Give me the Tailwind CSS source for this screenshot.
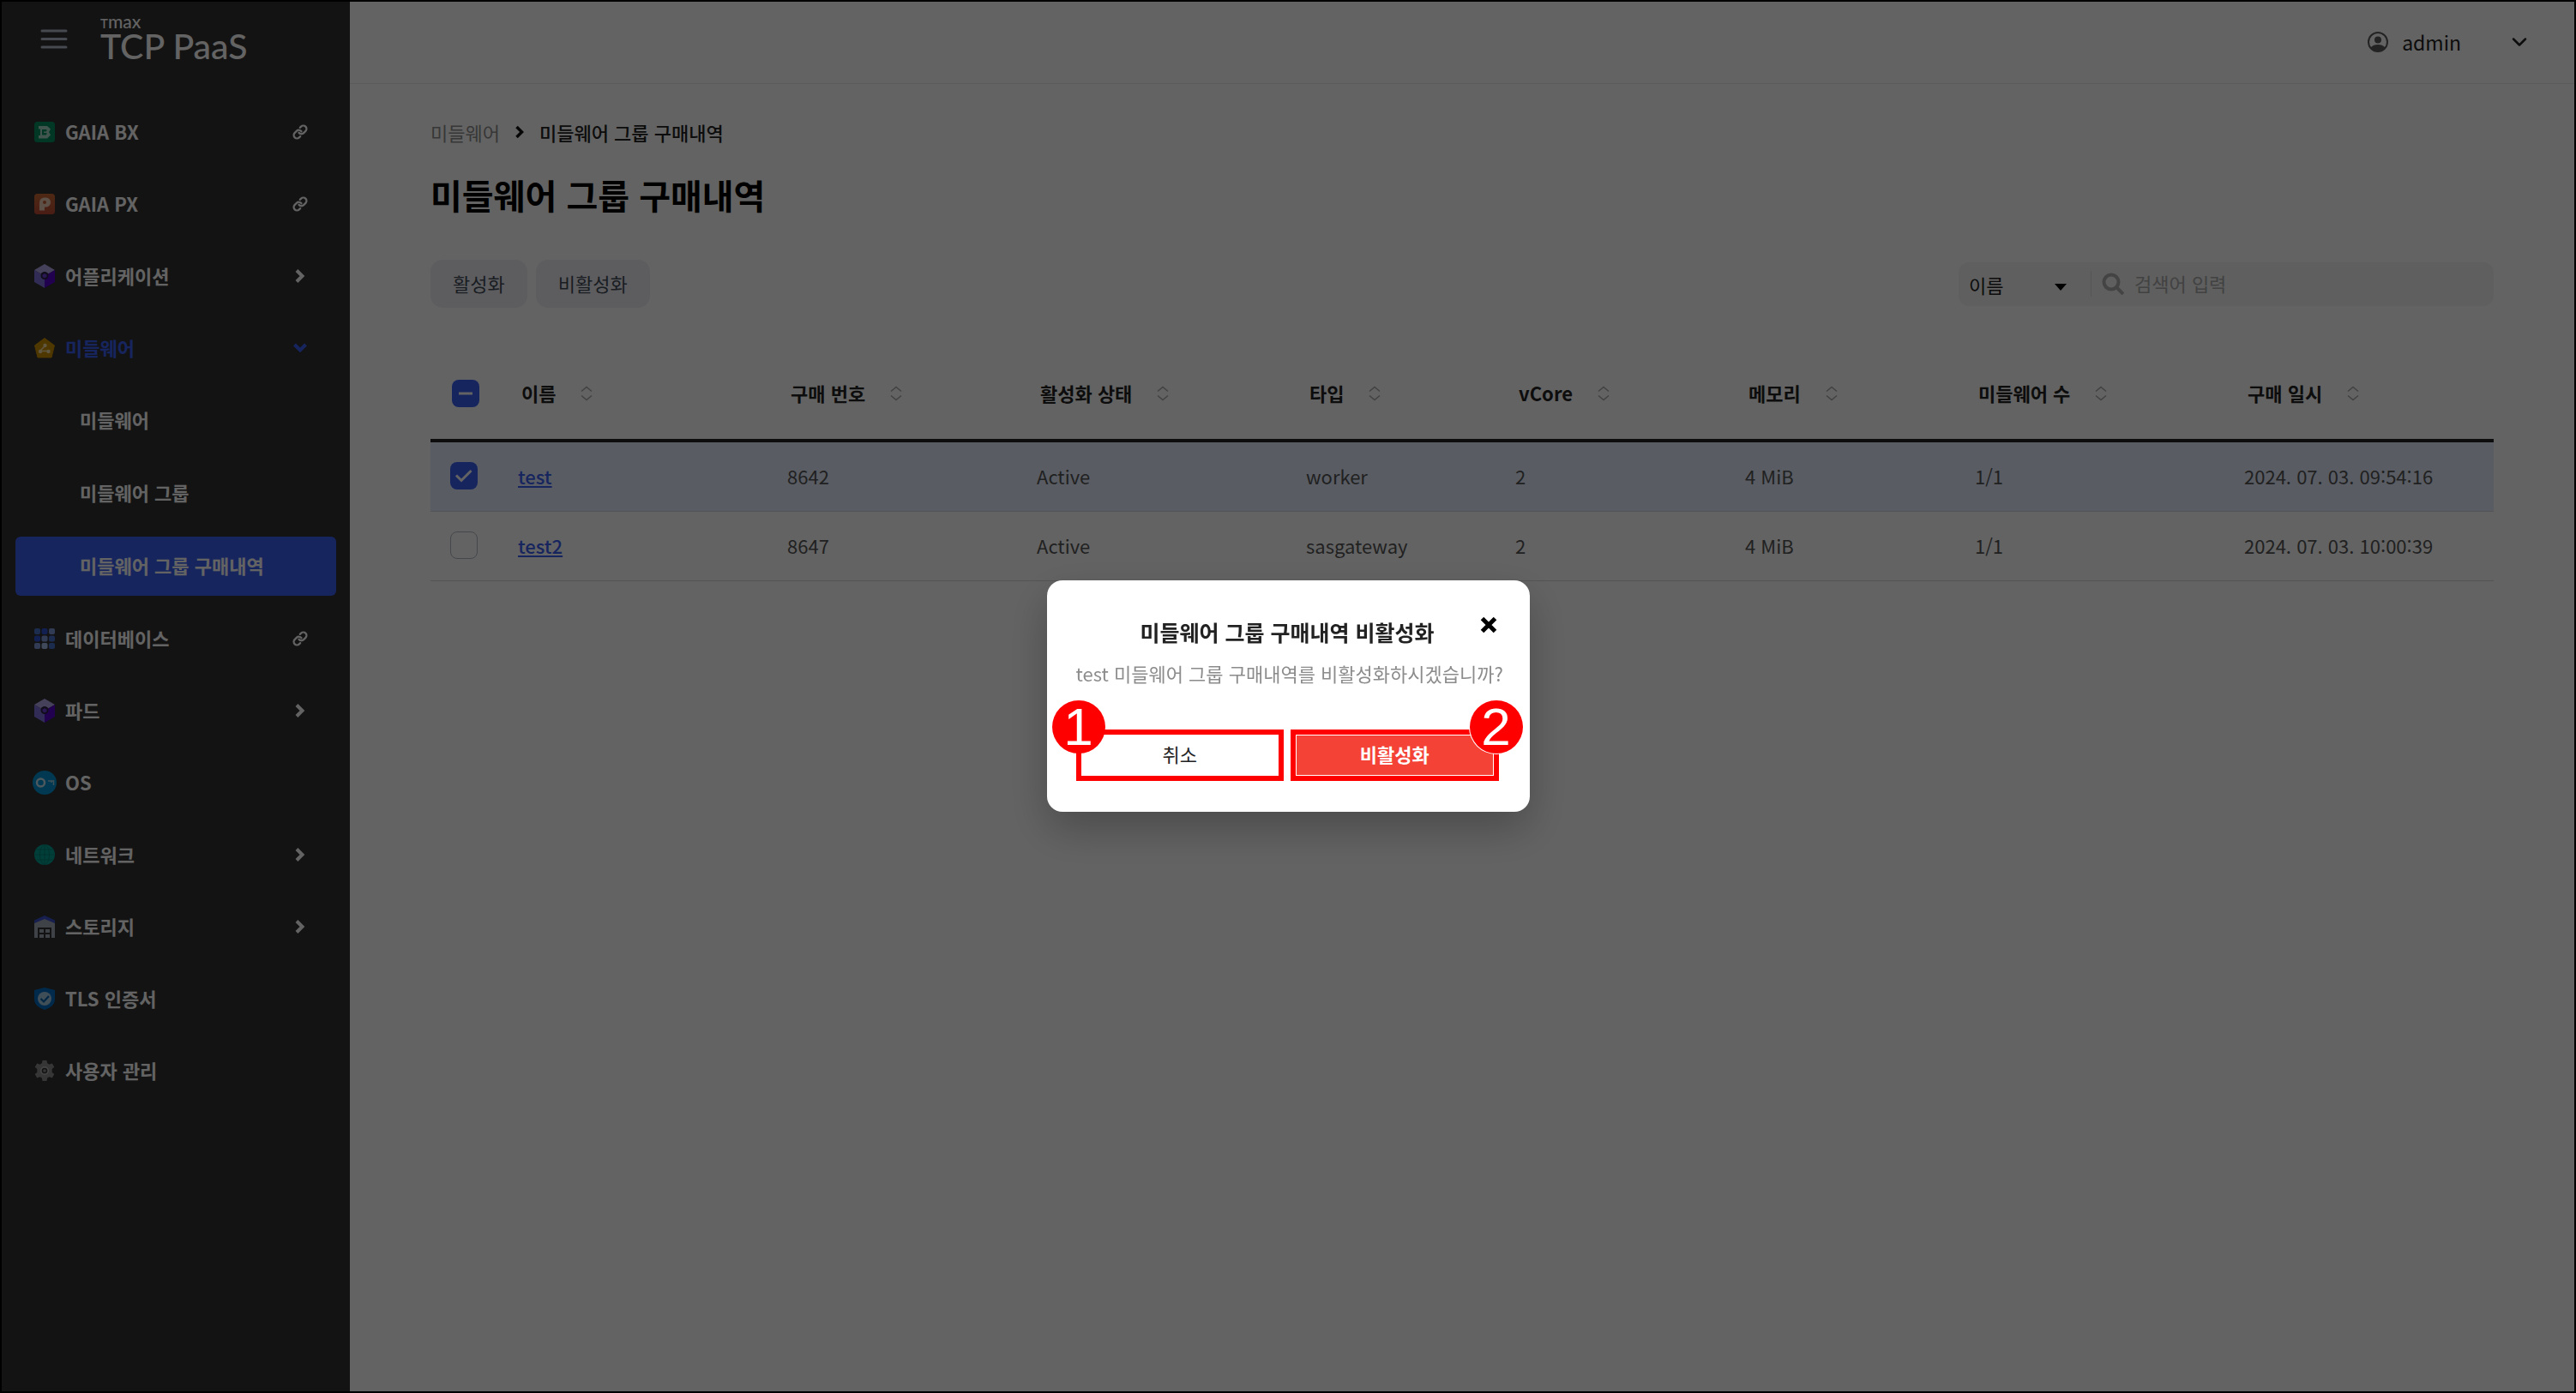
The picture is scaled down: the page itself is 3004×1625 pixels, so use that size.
<!DOCTYPE html>
<html lang="ko">
<head>
<meta charset="utf-8">
<meta name="viewport" content="width=device-width, initial-scale=1">
<title>TCP PaaS - 미들웨어 그룹 구매내역</title>
<script src="https://cdn.jsdelivr.net/npm/@tailwindcss/browser@4"></script>
</head>
<body class="bg-white font-['Noto_Sans_CJK_KR','Noto_Sans_CJK_JP',sans-serif] text-[22px] leading-8 text-[#222]">
<svg class="hidden" aria-hidden="true">
  <symbol id="link" viewBox="0 0 24 24" fill="none" stroke="currentColor" stroke-width="3" stroke-linecap="round" stroke-linejoin="round"><path d="M10 13a5 5 0 0 0 7.54.54l3-3a5 5 0 0 0-7.07-7.07l-1.72 1.71"/><path d="M14 11a5 5 0 0 0-7.54-.54l-3 3a5 5 0 0 0 7.07 7.07l1.71-1.71"/></symbol>
  <symbol id="chev" viewBox="0 0 24 24" fill="none" stroke="currentColor" stroke-width="4"><path d="M8 5.500l6.500 6.500L8 18.500"/></symbol>
  <symbol id="sort" viewBox="0 0 14 18" fill="none" stroke="currentColor" stroke-width="1.500"><path d="M1 6.500l6-5 6 5M1 11.500l6 5 6-5"/></symbol>
  <symbol id="cube" viewBox="0 0 24 28"><path fill="#b3a7e8" d="M12 0l12 7-12 7L0 7z"/><path fill="#7e72da" d="M0 7l12 7v14L0 21z"/><path fill="#5500cc" d="M24 7l-12 7v14l12-7z"/><circle cx="12" cy="13.500" r="4.500" fill="#2a2040"/><path fill="#6a3fd0" d="M12 11l2.500 1.500v2.500L12 16.500 9.500 15v-2.500z"/></symbol>
</svg>

<div class="flex min-h-screen border-2 border-black">
  <aside class="w-[406px] shrink-0 bg-[#313131] font-bold text-white">
    <div class="flex h-[110px] items-start pl-[45px]">
      <button type="button" aria-label="메뉴" class="mt-8 text-[#b4bccb]">
        <svg class="h-6 w-8" viewBox="0 0 32 24" fill="none" stroke="currentColor" stroke-width="3" stroke-linecap="round"><path d="M2 2h28M2 11.500h28M2 21h28"/></svg>
      </button>
      <a href="#" class="mt-[15px] ml-[38px] font-[Lato,sans-serif] font-medium">
        <span class="block h-4 text-[21px] leading-4"><span class="text-[15px]">T</span>max</span>
        <span class="block text-[41px] leading-[42px]">TCP PaaS</span>
      </a>
    </div>
    <nav>
      <ul>
        <li class="h-[84px] px-4"><a href="#" class="flex h-[84px] items-center gap-3 pr-[30px] pl-[22px]">
          <svg class="size-6" viewBox="0 0 24 24"><rect width="24" height="24" rx="3.500" fill="#008f60"/><path fill="#a8dcc8" d="M5 5h10l4 3.500-2 3.500 2 3.500-4 4H5v-3.500h2V8.500H5z"/><path fill="#008f60" d="M9 9h4.500l1.500 1-1.500 1.500H11v1.500h3l1 1-1.500 1.500H9z"/></svg>
          <span class="flex-1 pb-[3px]">GAIA BX</span><svg class="mr-[3px] size-[18px]"><use href="#link"/></svg></a></li>
        <li class="h-[84px] px-4"><a href="#" class="flex h-[84px] items-center gap-3 pr-[30px] pl-[22px]">
          <svg class="size-6" viewBox="0 0 24 24"><defs><linearGradient id="po" x1="0" y1="0" x2="0" y2="1"><stop stop-color="#c96a35"/><stop offset="1" stop-color="#bd4a35"/></linearGradient></defs><rect width="24" height="24" rx="3.500" fill="url(#po)"/><path fill="#f0cdb8" d="M6 19.500v-8c0-4.500 2-7 6.500-7 4 0 6.500 2 6.500 5.500s-2.500 5.500-6 5.500h-1v4z"/><circle cx="12" cy="10" r="2" fill="#bf5a30"/></svg>
          <span class="flex-1 pb-[3px]">GAIA PX</span><svg class="mr-[3px] size-[18px]"><use href="#link"/></svg></a></li>
        <li class="h-[84px] px-4"><a href="#" class="flex h-[84px] items-center gap-3 pr-[30px] pl-[22px]">
          <svg class="h-7 w-6"><use href="#cube"/></svg>
          <span class="flex-1 pb-[3px]">어플리케이션</span><svg class="size-6"><use href="#chev"/></svg></a></li>
        <li>
          <a href="#" class="mx-4 flex h-[84px] items-center gap-3 pr-[30px] pl-[22px] text-[#3d61f5]">
            <svg class="size-6" viewBox="0 0 24 24"><path fill="#cc8f00" d="M12 0.500L23.500 9 20 23H4L.5 9z" stroke="#cc8f00" stroke-linejoin="round"/><path d="M12.500 9.500l-6 6h11" stroke="#f4dfa8" stroke-width="1.500" fill="none"/><g fill="#f4dfa8"><circle cx="12.500" cy="9" r="2.200"/><circle cx="7" cy="16" r="2.200"/><circle cx="16.500" cy="16" r="2.200"/></g></svg>
            <span class="flex-1 pb-[3px]">미들웨어</span><svg class="size-6 rotate-90"><use href="#chev"/></svg></a>
          <ul>
            <li class="flex h-[85px] items-center px-4"><a href="#" class="flex h-[69px] flex-1 items-center pb-[3px] pl-[75px]">미들웨어</a></li>
            <li class="flex h-[85px] items-center px-4"><a href="#" class="flex h-[69px] flex-1 items-center pb-[3px] pl-[75px]">미들웨어 그룹</a></li>
            <li class="flex h-[85px] items-center px-4"><a href="#" aria-current="page" class="flex h-[69px] flex-1 items-center rounded-md bg-[#3d61f5] pb-[3px] pl-[75px]">미들웨어 그룹 구매내역</a></li>
          </ul>
        </li>
        <li class="h-[84px] px-4"><a href="#" class="flex h-[84px] items-center gap-3 pr-[30px] pl-[22px]">
          <svg class="size-6" viewBox="0 0 24 24"><g fill="#4a72c8"><rect width="7" height="7" rx="2"/><rect x="17" y="8.500" width="7" height="7" rx="2"/><rect x="17" y="17" width="7" height="7" rx="2"/></g><g fill="#2f50d0"><rect x="8.500" width="7" height="7" rx="2"/><rect y="8.500" width="7" height="7" rx="2"/></g><g fill="#7f9bd8"><rect x="17" width="7" height="7" rx="2"/><rect x="8.500" y="8.500" width="7" height="7" rx="2"/><rect y="17" width="7" height="7" rx="2"/></g><rect x="8.500" y="17" width="7" height="7" rx="2" fill="#a6bce6"/></svg>
          <span class="flex-1 pb-[3px]">데이터베이스</span><svg class="mr-[3px] size-[18px]"><use href="#link"/></svg></a></li>
        <li class="h-[84px] px-4"><a href="#" class="flex h-[84px] items-center gap-3 pr-[30px] pl-[22px]">
          <svg class="h-7 w-6"><use href="#cube"/></svg>
          <span class="flex-1 pb-[3px]">파드</span><svg class="size-6"><use href="#chev"/></svg></a></li>
        <li class="h-[84px] px-4"><a href="#" class="flex h-[84px] items-center gap-2.5 pr-[30px] pl-5">
          <svg class="size-7" viewBox="0 0 28 28"><circle cx="14" cy="14" r="14" fill="#0094d0"/><circle cx="9.500" cy="14" r="4.500" fill="none" stroke="#c8e4f0" stroke-width="2.500"/><path d="M18 12h6.500v5M22 12v2" fill="none" stroke="#a0d0e4" stroke-width="1.500"/></svg>
          <span class="flex-1 pb-[3px]">OS</span></a></li>
        <li class="h-[84px] px-4"><a href="#" class="flex h-[84px] items-center gap-3 pr-[30px] pl-[22px]">
          <svg class="size-6" viewBox="0 0 24 24"><circle cx="12" cy="12" r="12" fill="#00a394"/><g fill="none" stroke="#007f74" stroke-width="1"><ellipse cx="12" cy="12" rx="5.500" ry="11.500"/><path d="M12 0v24M.5 12h23M2.500 6h19M2.500 18h19"/></g></svg>
          <span class="flex-1 pb-[3px]">네트워크</span><svg class="size-6"><use href="#chev"/></svg></a></li>
        <li class="h-[84px] px-4"><a href="#" class="flex h-[84px] items-center gap-3 pr-[30px] pl-[22px]">
          <svg class="h-[26px] w-6" viewBox="0 0 24 26"><path fill="#a3a9b8" d="M0 8.500L12 3.500l12 5V26h-4V14H4v12H0z"/><path fill="#3a50cc" d="M0 5.500L12 0l12 5.500V9L12 4 0 9z"/><path fill="#a3a9b8" d="M6 16h5v4H6zM13 16h5v4h-5zM6 22h5v4H6zM13 22h5v4h-5z"/></svg>
          <span class="flex-1 pb-[3px]">스토리지</span><svg class="size-6"><use href="#chev"/></svg></a></li>
        <li class="h-[84px] px-4"><a href="#" class="flex h-[84px] items-center gap-3 pr-[30px] pl-[22px]">
          <svg class="h-[26px] w-6" viewBox="0 0 24 26"><path fill="#006cc0" d="M12 0l12 3v10c0 7-5 10.500-12 13C5 23.500 0 20 0 13V3z"/><circle cx="12" cy="13" r="8" fill="#a6c8e2"/><path d="M7.500 13l3.500 3.500 6-6.500" fill="none" stroke="#0062ad" stroke-width="2.200"/></svg>
          <span class="flex-1 pb-[3px]">TLS 인증서</span></a></li>
        <li class="h-[84px] px-4"><a href="#" class="flex h-[84px] items-center gap-3 pr-[30px] pl-[22px]">
          <svg class="size-6" viewBox="0 0 24 24"><path fill="#8c8c8c" d="M9.500 0h5l.6 3.300 2.400 1.400 3.300-1.200 2.500 4.300-2.600 2.200v3.900l2.600 2.200-2.500 4.300-3.300-1.200-2.400 1.400-.6 3.400h-5l-.6-3.400-2.400-1.400-3.300 1.200L.7 16.100l2.600-2.200V10L.7 7.800l2.500-4.300 3.300 1.200 2.400-1.400z"/><circle cx="12" cy="12" r="5" fill="#b0b0b0"/><circle cx="12" cy="12" r="2.600" fill="#8a8a8a" stroke="#313131" stroke-width="1.500"/></svg>
          <span class="flex-1 pb-[3px]">사용자 관리</span></a></li>
      </ul>
    </nav>
  </aside>

  <div class="min-w-0 flex-1">
    <header class="flex h-24 items-center justify-end gap-4 border-b border-[#ebebeb] pr-[54px] pb-0.5">
      <svg class="size-6 text-[#5c5c5c]" viewBox="0 0 24 24"><circle cx="12" cy="12" r="11" fill="none" stroke="currentColor" stroke-width="2"/><circle cx="12" cy="9.500" r="4" fill="currentColor"/><path fill="currentColor" d="M3.500 18.500c2-2.500 5-3.500 8.500-3.500s6.500 1 8.500 3.500c-2 3-5 4.500-8.500 4.500s-6.500-1.500-8.500-4.500z"/></svg>
      <button type="button" class="flex items-center gap-[58px] text-[23px]">admin
        <svg class="size-5" viewBox="0 0 20 20" fill="none" stroke="currentColor" stroke-width="2.500" stroke-linecap="round" stroke-linejoin="round"><path d="M3 6.500l7 7 7-7"/></svg>
      </button>
    </header>

    <main class="px-[94px] pt-10">
      <nav aria-label="breadcrumb" class="flex h-8 items-center">
        <a href="#" class="text-[#8f8f8f]">미들웨어</a>
        <svg class="mx-[11px] size-6 text-[#111]" viewBox="0 0 24 24" fill="none" stroke="currentColor" stroke-width="3.500"><path d="M8.500 6l6 6-6 6"/></svg>
        <span class="font-medium">미들웨어 그룹 구매내역</span>
      </nav>
      <h1 class="mt-[27px] text-[40px] leading-[60px] font-bold text-black">미들웨어 그룹 구매내역</h1>

      <div class="mt-[46px] flex items-center justify-between">
        <div class="flex gap-2.5 text-[#444b58]">
          <button type="button" class="h-14 rounded-[14px] bg-[#eff0f6] px-[26px] pb-[3px]">활성화</button>
          <button type="button" class="h-14 rounded-[14px] bg-[#eff0f6] px-[26px] pb-[3px]">비활성화</button>
        </div>
        <form class="flex h-[51px] w-[624px] items-center rounded-xl bg-[#f4f4f4]">
          <div class="grid h-[30px] w-[155px] items-center border-r border-[#dedede]">
            <select aria-label="검색 기준" class="col-start-1 row-start-1 w-full appearance-none pb-[3px] pl-3"><option>이름</option></select>
            <svg class="pointer-events-none col-start-1 row-start-1 mt-0.5 mr-7 h-2 w-3.5 justify-self-end text-black" viewBox="0 0 14 8"><path fill="currentColor" d="M0 0h14L7 8z"/></svg>
          </div>
          <label for="q" class="ml-3"><svg class="size-[26px] text-[#b0b0b0]" viewBox="0 0 26 26" fill="none" stroke="currentColor" stroke-width="4"><circle cx="11" cy="11" r="8.500"/><path d="M17 17l8 8"/></svg></label>
          <input id="q" type="search" placeholder="검색어 입력" class="ml-3 min-w-0 flex-1 bg-transparent pb-[3px] placeholder:text-[#aaa]">
        </form>
      </div>

      <table class="mt-[47px] w-full table-fixed border-separate border-spacing-0 text-left">
        <colgroup><col class="w-[98px]"><col class="w-[314px]"><col class="w-[291px]"><col class="w-[314px]"><col class="w-[244px]"><col class="w-[268px]"><col class="w-[268px]"><col class="w-[314px]"><col class="w-[295px]"></colgroup>
        <thead>
          <tr class="h-[110px] [&>th]:border-b-4 [&>th]:border-[#222] [&>th]:pl-2">
            <th class="pl-[25px]!"><div class="grid size-8 place-items-center"><input type="checkbox" aria-label="전체 선택" class="col-start-1 row-start-1 size-8 appearance-none rounded-lg bg-[#3d61f5]"><svg class="pointer-events-none col-start-1 row-start-1 size-8 text-white" viewBox="0 0 32 32" stroke="currentColor" stroke-width="3"><path d="M8 16h16"/></svg></div></th>
            <th><div class="flex items-center gap-[29px]"><span class="pb-[3px]">이름</span><svg class="h-[18px] w-3.5 text-[#a8a8a8]"><use href="#sort"/></svg></div></th>
            <th><div class="flex items-center gap-[29px]"><span class="pb-[3px]">구매 번호</span><svg class="h-[18px] w-3.5 text-[#a8a8a8]"><use href="#sort"/></svg></div></th>
            <th><div class="flex items-center gap-[29px]"><span class="pb-[3px]">활성화 상태</span><svg class="h-[18px] w-3.5 text-[#a8a8a8]"><use href="#sort"/></svg></div></th>
            <th><div class="flex items-center gap-[29px]"><span class="pb-[3px]">타입</span><svg class="h-[18px] w-3.5 text-[#a8a8a8]"><use href="#sort"/></svg></div></th>
            <th><div class="flex items-center gap-[29px]"><span class="pb-[3px]">vCore</span><svg class="h-[18px] w-3.5 text-[#a8a8a8]"><use href="#sort"/></svg></div></th>
            <th><div class="flex items-center gap-[29px]"><span class="pb-[3px]">메모리</span><svg class="h-[18px] w-3.5 text-[#a8a8a8]"><use href="#sort"/></svg></div></th>
            <th><div class="flex items-center gap-[29px]"><span class="pb-[3px]">미들웨어 수</span><svg class="h-[18px] w-3.5 text-[#a8a8a8]"><use href="#sort"/></svg></div></th>
            <th><div class="flex items-center gap-[29px]"><span class="pb-[3px]">구매 일시</span><svg class="h-[18px] w-3.5 text-[#a8a8a8]"><use href="#sort"/></svg></div></th>
          </tr>
        </thead>
        <tbody class="text-[#555]">
          <tr class="h-[81px] bg-[#e6eeff] [&>td]:border-b [&>td]:border-[#d5d9dd] [&>td]:pb-[3px] [&>td]:pl-1">
            <td class="pl-[23px]!"><div class="grid size-8 place-items-center"><input type="checkbox" checked aria-label="test 선택" class="col-start-1 row-start-1 size-8 appearance-none rounded-lg bg-[#3d61f5]"><svg class="pointer-events-none col-start-1 row-start-1 size-8 text-white" viewBox="0 0 32 32" fill="none" stroke="currentColor" stroke-width="3"><path d="M7 15.500l6 6 11.500-11.500"/></svg></div></td>
            <td><a href="#" class="font-medium text-[#3d61f5] underline">test</a></td><td>8642</td><td>Active</td><td>worker</td><td>2</td><td>4 MiB</td><td>1/1</td><td>2024. 07. 03. 09:54:16</td>
          </tr>
          <tr class="h-[81px] [&>td]:border-b [&>td]:border-[#d5d9dd] [&>td]:pb-[3px] [&>td]:pl-1">
            <td class="pl-[23px]!"><input type="checkbox" aria-label="test2 선택" class="block size-8 appearance-none rounded-lg border border-[#b0b8c0]"></td>
            <td><a href="#" class="font-medium text-[#3d61f5] underline">test2</a></td><td>8647</td><td>Active</td><td>sasgateway</td><td>2</td><td>4 MiB</td><td>1/1</td><td>2024. 07. 03. 10:00:39</td>
          </tr>
        </tbody>
      </table>
    </main>
  </div>
</div>

<div class="fixed inset-0 flex items-center justify-center border-2 border-black bg-black/61 pb-0.5">
  <div role="dialog" aria-modal="true" aria-labelledby="dlg" class="relative w-[563px] rounded-[18px] bg-white pt-10 pr-9 pb-9 pl-[34px] text-center shadow-[0_20px_50px_rgba(0,0,0,0.25)]">
    <button type="button" aria-label="닫기" class="absolute top-10 right-9 text-black"><svg class="size-6" viewBox="0 0 24 24" stroke="currentColor" stroke-width="5"><path d="M4.500 4.500l15 15M19.500 4.500l-15 15"/></svg></button>
    <h2 id="dlg" class="text-[25px] leading-10 font-bold text-[#222]">미들웨어 그룹 구매내역 비활성화</h2>
    <p class="mt-3 whitespace-nowrap text-[#8c8c8c]">test 미들웨어 그룹 구매내역를 비활성화하시겠습니까?</p>
    <div class="mt-[50px] flex gap-2">
      <div class="relative flex-1">
        <button type="button" class="h-[60px] w-full border-6 border-[#f00] bg-white pb-[3px] text-[#222]">취소</button>
        <span class="absolute -top-[34px] -left-7 grid size-[62px] place-items-center rounded-full bg-[#f00] font-['Liberation_Sans',sans-serif] text-[62px] leading-none text-white">1</span>
      </div>
      <div class="relative flex-1">
        <button type="button" class="h-[60px] w-full border-6 border-[#f00] bg-[#f44336] pb-[3px] font-bold text-white inset-ring inset-ring-white">비활성화</button>
        <span class="absolute -top-[34px] -right-7 grid size-[62px] place-items-center rounded-full bg-[#f00] font-['Liberation_Sans',sans-serif] text-[62px] leading-none text-white ring-1 ring-white">2</span>
      </div>
    </div>
  </div>
</div>
</body>
</html>
